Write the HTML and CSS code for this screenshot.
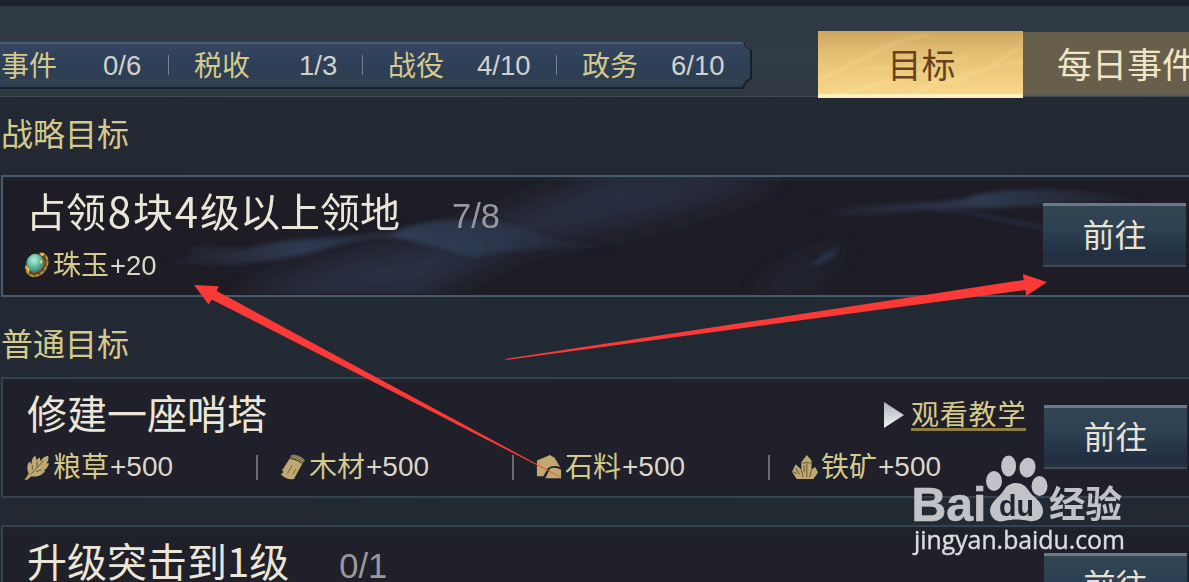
FILE: index.html
```html
<!DOCTYPE html>
<html lang="zh-CN">
<head>
  <meta charset="utf-8">
  <title>目标</title>
  <link rel="stylesheet" href="styles.css">
</head>
<body>
  <div class="page">
    <div class="header">
      <div class="stats">
        <div class="stats-in">
          <div class="stat first"><span class="name">事件</span><span class="num">0/6</span></div>
          <div class="stat"><span class="name">税收</span><span class="num">1/3</span></div>
          <div class="stat wide"><span class="name">战役</span><span class="num">4/10</span></div>
          <div class="stat wide"><span class="name">政务</span><span class="num">6/10</span></div>
        </div>
      </div>
      <div class="tabs">
        <a class="tab on">
          <svg class="shine" viewBox="0 0 205 66" preserveAspectRatio="none">
            <g class="streaks" fill="none" stroke="#fff0b0" stroke-width="3" opacity=".2">
              <path d="M0 48C40 36 60 10 110 4M20 64C60 52 120 40 150 24M90 66C120 50 130 46 205 30M48 38C70 36 90 40 120 30"/>
              <path d="M104 62L124 42M130 52C160 44 180 34 200 16"/>
            </g>
          </svg>
          <span>目标</span>
        </a>
        <a class="tab">每日事件</a>
      </div>
    </div>

    <h2 class="sec">战略目标</h2>
    <div class="card main">
      <svg class="waves" viewBox="0 0 1187 117" preserveAspectRatio="none">
        <defs>
          <filter id="b1" x="-20%" y="-50%" width="140%" height="200%"><feGaussianBlur stdDeviation="14"/></filter>
          <filter id="b2" x="-20%" y="-50%" width="140%" height="200%"><feGaussianBlur stdDeviation="2.200"/></filter>
          <linearGradient id="w1" x1="0" x2="1">
            <stop offset="0" stop-color="#35445f" stop-opacity="0"/>
            <stop offset=".5" stop-color="#35445f" stop-opacity=".75"/>
            <stop offset="1" stop-color="#35445f" stop-opacity="0"/>
          </linearGradient>
          <linearGradient id="w2" x1="0" x2="1">
            <stop offset="0" stop-color="#3d5070" stop-opacity=".8"/>
            <stop offset=".5" stop-color="#2f3f58" stop-opacity=".7"/>
            <stop offset="1" stop-color="#2c3a52" stop-opacity=".1"/>
          </linearGradient>
        </defs>
        <g filter="url(#b1)" fill="#2b334b">
          <path d="M230 125C290 95 350 74 400 68C500 50 560 10 620 -5L780 -5C720 25 620 46 540 62C470 80 440 117 400 125Z" opacity=".8"/>
          <path d="M740 117C780 105 800 75 850 70C820 90 800 110 790 117Z" opacity=".5"/>
        </g>
        <g filter="url(#b2)">
          <path d="M180 69C205 70 225 73 245 71C290 60 330 62 375 56C400 53 420 60 450 64C420 64 390 60 365 62C320 70 285 86 230 87C200 88 180 86 150 86C190 82 200 76 180 69Z" fill="url(#w1)"/>
          <path d="M385 58C425 38 490 38 540 58C570 67 590 68 612 70C560 72 500 72 470 80C450 74 420 66 385 58Z" fill="url(#w2)" opacity=".75"/>
          <path d="M800 38C850 25 920 28 960 22C1000 8 1070 10 1150 24C1100 24 1040 28 990 31C940 30 900 34 870 38C840 40 820 34 800 38Z" fill="url(#w1)"/>
          <path d="M930 32C970 33 1000 45 1045 51" fill="none" stroke="#2a344d" stroke-width="2"/>
          <path d="M808 88C815 80 825 74 835 72C832 80 822 88 808 88Z" fill="#28364e"/>
        </g>
      </svg>
      <div class="info">
        <div class="title">占领<b>8</b>块<b>4</b>级以上领地<span class="prog">7/8</span></div>
        <div class="rewards">
          <div class="reward">
            <svg class="ico" viewBox="0 0 28 28">
              <defs>
                <radialGradient id="jade" cx=".4" cy=".35" r=".7">
                  <stop offset="0" stop-color="#b4f0d8"/><stop offset=".5" stop-color="#68c0a4"/><stop offset="1" stop-color="#347a6c"/>
                </radialGradient>
              </defs>
              <path d="M16 1C22 0 27 5 26 13C25 22 17 28 9 27C3 25 1 21 2 14Z" fill="#5c4720"/>
              <path d="M18 1.500C24 2 26 7 25 13C23 21 17 26 10 26C5 25 2 21 2 16" fill="none" stroke="#b58f40" stroke-width="2.200" stroke-dasharray="5 1"/>
              <path d="M22 9C22 16 17 21 9 22" fill="none" stroke="#8e6a2a" stroke-width="1.500"/>
              <ellipse cx="12" cy="12" rx="9" ry="10" fill="url(#jade)" transform="rotate(15 12 11)"/>
              <path d="M1 14L6 18L5 23ZM17 1L22 2L19 5Z" fill="#e9c763"/>
              <path d="M17 10l2-2 1 3-2 2z" fill="#e9d27a"/>
            </svg>
            <span class="name">珠玉</span><span class="num">+20</span>
          </div>
        </div>
      </div>
      <a class="go">前往</a>
    </div>

    <h2 class="sec second">普通目标</h2>
    <div class="card">
      <div class="info">
        <div class="title">修建一座哨塔</div>
        <div class="rewards">
          <div class="reward">
            <svg class="ico" viewBox="0 0 28 28">
              <path d="M2 26L5 21C3 16 3 11 6 8L8 11C8 7 9 4 12 2L14 7C15 5 15 4 17 4L18 8C20 4 22 3 26 2C27 6 26 8 24 10L27 10C26 14 24 16 21 18L23 18C20 23 14 25 8 24L3 28L0 27Z" fill="#bfa970"/>
              <path d="M7 22C12 17 17 12 21 7M9 17L9 12M14 14L14 8M13 19L19 17" stroke="#54492f" stroke-width=".9" fill="none"/>
            </svg>
            <span class="name">粮草</span><span class="num">+500</span>
          </div>
          <div class="reward">
            <svg class="ico" viewBox="0 0 28 28">
              <path d="M11 4C16 4 21 6 25 9L15 27C10 28 5 26 1 22L4 19L2 18Z" fill="#bfa970"/>
              <path d="M12 1C18 0 24 3 27 7L25 9C21 6 16 4 11 4Z" fill="#8d7c52"/>
              <path d="M11 5C16 5 20 7 24 10" stroke="#302c22" stroke-width="1.100" fill="none"/>
              <path d="M13 12L8 21M17 16L14 22" stroke="#6b5d3c" stroke-width=".9" fill="none"/>
            </svg>
            <span class="name">木材</span><span class="num">+500</span>
          </div>
          <div class="reward">
            <svg class="ico" viewBox="0 0 28 28">
              <path d="M1 7L15 1L20 4L26 14C21 12 16 13 13 15L8 24L1 24Z" fill="#bfa970"/>
              <path d="M15 16C19 14 23 15 27 17L27 26L10 26Z" fill="#bfa970"/>
            </svg>
            <span class="name">石料</span><span class="num">+500</span>
          </div>
          <div class="reward">
            <svg class="ico" viewBox="0 0 28 28">
              <path d="M10 9L16 1L21 7L21 17L25 14L28 20L23 27L5 27L0 19L4 11L10 17Z" fill="#bfa970"/>
              <path d="M11 10L16 9L20 10M16 10L16 25M13 12L13 20M4 15L8 22M10 17L12 25M21 17L19 25M1 19L5 21" stroke="#54492f" stroke-width=".9" fill="none"/>
            </svg>
            <span class="name">铁矿</span><span class="num">+500</span>
          </div>
        </div>
      </div>
      <a class="watch">
        <svg class="play" viewBox="0 0 20 26">
          <defs><linearGradient id="pg" x1="0" y1="0" x2="0" y2="1"><stop offset="0" stop-color="#aeb4c2"/><stop offset="1" stop-color="#eef3f0"/></linearGradient></defs>
          <path d="M0 0L20 13L0 26Z" fill="url(#pg)"/>
        </svg>
        <span>观看教学</span>
      </a>
      <a class="go">前往</a>
    </div>

    <div class="card next">
      <div class="info">
        <div class="title">升级突击到1级<span class="prog">0/1</span></div>
      </div>
      <a class="go">前往</a>
    </div>

    <!-- 箭头 -->
    <svg class="arrows" viewBox="0 0 1189 582">
      <g fill="#fb3a38">
        <path d="M194 285L218.700 286.300L216.700 291L560 476.500L559 476.500L211.700 299.500L208.700 304.500Z"/>
        <path d="M1047 282.300L1023 274L1023.700 280L505.500 359L505.500 360L1025.500 290L1026 296Z"/>
      </g>
    </svg>

    <!-- 水印 -->
    <svg class="mark" viewBox="0 0 220 106">
      <g fill="#c2c3c6">
        <text class="bai" x="2.500" y="70.500" textLength="75" lengthAdjust="spacingAndGlyphs">Bai</text>
        <ellipse cx="85" cy="31" rx="8" ry="10"/>
        <ellipse cx="99.600" cy="16" rx="7.500" ry="10.500"/>
        <ellipse cx="118.600" cy="17.500" rx="8" ry="10" transform="rotate(10 118 17)"/>
        <ellipse cx="130.500" cy="36" rx="8" ry="10"/>
        <path d="M107 33C113 33 117 36 120 41C124 47 134 52 134 61C134 69 127 72 120 71C111 69 104 69 95 71C87 73 81 67 81 60C82 51 91 47 95 40C98 35 102 33 107 33Z"/>
        <text class="jy" x="140" y="67.500" textLength="73" lengthAdjust="spacingAndGlyphs">经验</text>
      </g>
      <text class="du" x="90" y="66" textLength="35" lengthAdjust="spacingAndGlyphs">du</text>
      <text class="url" x="5" y="99" textLength="211" lengthAdjust="spacingAndGlyphs">jingyan.baidu.com</text>
    </svg>
  </div>
</body>
</html>
```
FILE: styles.css
```css
*{box-sizing:border-box}
body{
    margin:0;
    background:#222a33;
    font-family:"Liberation Sans","Noto Sans CJK SC",sans-serif;
}
.page{
    position:relative;
    width:1189px;
    height:582px;
    overflow:hidden;
    background:linear-gradient(90deg,#232933,#212a33 50%,#222932);
}
svg{display:block}
.name,.title,.sec,.tab,.go,.watch{font-family:"Noto Sans CJK SC",sans-serif}

/* header */
.header{
    display:flex;
    justify-content:space-between;
    height:97px;
    border-top:6px solid #1b212d;
    border-bottom:1px solid #414b52;
    background:linear-gradient(#2f3944,#303b43 60%,#2f3841);
}
.stats{
    width:752px;
    height:47px;
    margin-top:36px;
    padding-bottom:2px;
    background:#182029;
    clip-path:polygon(0 0,744px 0,746px 5px,752px 8px,752px 37px,746px 41px,744px 47px,0 47px);
}
.stats-in{
    display:flex;
    width:750px;
    height:45px;
    border-top:2px solid #45617a;
    background:linear-gradient(#36455f,#2d4059 45%,#2d3f50 80%,#344557 88%,#263b4d);
    clip-path:polygon(0 0,743px 0,745px 5px,750px 8px,750px 36px,745px 39px,742px 45px,0 45px);
}
.stat{
    position:relative;
    display:flex;
    width:194px;
    height:43px;
    padding-left:26px;
    line-height:40px;
    font-size:28px;
}
.stat.first{width:168px;padding-left:1px}
.stat + .stat:before{
    content:"";
    position:absolute;
    left:0;
    top:11px;
    width:1px;
    height:20px;
    background:#76818d;
}
.stat .name{color:#d5c98b}
.stat .num{margin-left:49px;font-size:27.5px;line-height:44px;color:#d3d1cc}
.stat.first .num{margin-left:46px}
.stat.wide .num{margin-left:33px}

.tabs{display:flex;width:371px;margin-top:25px}
.tab{
    position:relative;
    flex:none;
    width:166px;
    height:64px;
    margin-top:1px;
    padding-left:34px;
    overflow:hidden;
    border-bottom:2px solid #5c594e;
    background:#685f4a;
    color:#efe7c8;
    font-size:35px;
    line-height:62px;
    white-space:nowrap;
}
.tab.on{
    width:205px;
    height:67px;
    margin:0 0 -2px;
    padding:0 0 0 2px;
    border-bottom:4px solid #fff2c0;
    background:linear-gradient(#cfa661,#e3bf74 35%,#f8d789);
    color:#67421f;
    font-size:34px;
    line-height:65px;
    text-align:center;
}
.tab.on span{position:relative}
.shine{position:absolute;left:0;top:0;width:205px;height:66px}
.streaks{filter:blur(1px)}

/* list */
.sec{
    margin:16px 0 22px 1px;
    height:40px;
    font-size:32px;
    font-weight:normal;
    line-height:39px;
    color:#d5c98b;
}
.sec.second{margin:26px 0 14px 1px}
.card{
    position:relative;
    display:flex;
    width:1200px;
    height:121px;
    margin-left:1px;
    padding-left:23px;
    border:2px solid #35424f;
    background:#1f2029;
    box-shadow:inset 0 3px 3px #20272b;
}
.card.main{height:122px;border-color:#485a6b;background:#1e1d26}
.card.next{margin-top:27px}
.waves{position:absolute;left:0;top:0;width:1187px;height:117px}
.info{position:relative;width:858px}
.title{
    display:flex;
    height:70px;
    padding-left:1px;
    font-size:40px;
    line-height:66px;
    color:#ece6d8;
    white-space:nowrap;
}
.main .title{padding-left:0}
.title b{width:27px;font-size:42px;font-weight:normal;text-align:center}
.prog{
    margin:6px 0 0 52px;
    font-family:"Liberation Sans",sans-serif;
    font-size:34.5px;
    color:#98989e;
}
.next .prog{margin-left:50px}
.rewards{display:flex;height:36px}
.reward{
    position:relative;
    display:flex;
    flex:none;
    width:256px;
    font-size:28px;
    line-height:36px;
}
.reward + .reward:before{
    content:"";
    position:absolute;
    left:-26px;
    top:6px;
    width:2px;
    height:25px;
    background:#6b6c72;
}
.ico{width:26px;height:26px;margin:5px 3px 0 -2px}
.reward .name{line-height:32px;color:#d5c98b}
.reward .num{margin-left:1px;line-height:36px;color:#dcd6ca}
.main .reward .num{font-size:27.5px;line-height:38px}
.watch{
    display:flex;
    align-items:flex-start;
    width:159px;
    height:53px;
    padding-top:23px;
    color:#d5c98b;
}
.watch span{
    height:29px;
    margin-left:7px;
    border-bottom:3px solid #907d40;
    font-size:28px;
    line-height:23px;
    letter-spacing:.8px;
    white-space:nowrap;
}
.play{width:20px;height:26px}
.go{
    position:relative;
    width:143px;
    height:64px;
    margin-top:26px;
    border-top:3px solid #67798a;
    border-bottom:2px solid #424854;
    background:linear-gradient(#324552,#2c4153 40%,#222e42 85%,#273140);
    font-size:32px;
    line-height:54px;
    text-align:center;
    color:#eae2d2;
}
.main .go{margin-left:159px}
.card .go{left:1px}
.card.main .go{left:0}
.next .go{margin-left:159px}

/* overlay */
.arrows{position:absolute;left:0;top:0;width:1189px;height:582px}
.mark{position:absolute;left:909px;top:450px;width:220px;height:106px}
.bai{font:bold 49px "Liberation Sans",sans-serif;stroke:#c2c3c6;stroke-width:.6px}
.jy{font:bold 37px "Noto Sans CJK SC",sans-serif}
.du{font:bold 29px "Liberation Sans",sans-serif;fill:#202631}
.url{font:25.5px "Open Sans","Noto Sans",sans-serif;fill:#dcdddf;stroke:#dcdddf;stroke-width:.4px}
```
